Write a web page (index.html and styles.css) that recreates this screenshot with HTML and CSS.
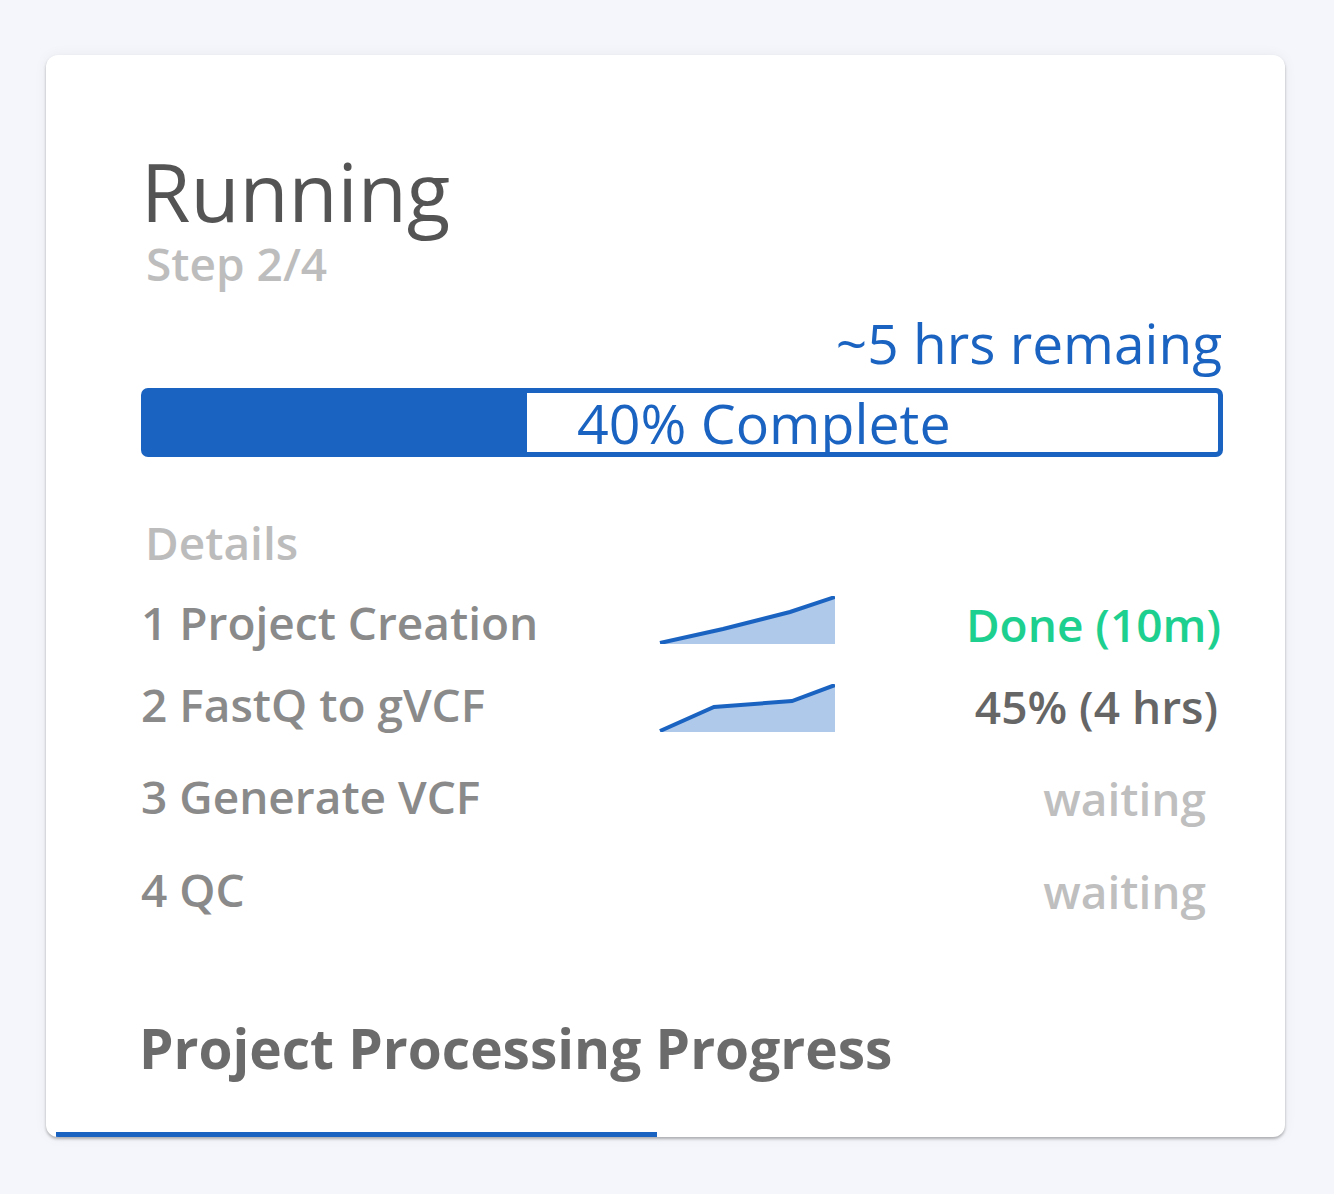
FILE: index.html
```html
<!DOCTYPE html>
<html lang="en">
<head>
<meta charset="utf-8">
<title>Project Processing Progress</title>
<link rel="stylesheet" href="styles.css">
</head>
<body>
<div class="card">
  <div class="content">
    <h1 class="title">Running</h1>
    <div class="step">Step 2/4</div>
    <div class="remaining">~5 hrs remaing</div>
    <div class="bar">
      <div class="bar-fill" style="width: 35.5%"></div>
      <span class="bar-label">40% Complete</span>
    </div>
    <div class="details-head">Details</div>
    <div class="row row-1">
      <span class="label">1 Project Creation</span>
      <svg class="spark spark-1" width="176" height="48" viewBox="0 0 176 48">
        <polygon points="1,48 64,34 131,17 176,2 176,48" fill="#afc9eb"/>
        <polyline points="1,47 64,33 131,16 176,1" fill="none" stroke="#1b63c1" stroke-width="4"/>
      </svg>
      <span class="status status-done">Done (10m)</span>
    </div>
    <div class="row row-2">
      <span class="label">2 FastQ to gVCF</span>
      <svg class="spark spark-2" width="176" height="48" viewBox="0 0 176 48">
        <polygon points="1,48 55,24 133,18 176,2 176,48" fill="#afc9eb"/>
        <polyline points="1,47 55,23 133,17 176,1" fill="none" stroke="#1b63c1" stroke-width="4"/>
      </svg>
      <span class="status status-run">45% (4 hrs)</span>
    </div>
    <div class="row row-3">
      <span class="label">3 Generate VCF</span>
      <span class="spark-empty"></span>
      <span class="status status-wait">waiting</span>
    </div>
    <div class="row row-4">
      <span class="label">4 QC</span>
      <span class="spark-empty"></span>
      <span class="status status-wait">waiting</span>
    </div>
    <h2 class="footer-title">Project Processing Progress</h2>
  </div>
  <div class="tab-line"></div>
</div>
</body>
</html>
```

FILE: styles.css
```css
html, body {
  margin: 0;
  padding: 0;
}
body {
  background: #f4f6fb;
  font-family: "Open Sans", "Noto Sans", sans-serif;
  width: 1334px;
  height: 1194px;
  overflow: hidden;
}
.card {
  margin: 55px 0 0 46px;
  width: 1239px;
  height: 1082px;
  background: #fff;
  border-radius: 12px;
  box-shadow: 0 2px 3px rgba(0, 0, 0, 0.28), 0 0 14px rgba(0, 0, 0, 0.05);
  display: flex;
  flex-direction: column;
  overflow: hidden;
}
.content {
  padding: 96px 62px 0 95px;
  display: flex;
  flex-direction: column;
}
.title {
  margin: 0;
  font-size: 80px;
  line-height: 80px;
  font-weight: 400;
  color: #545454;
}
.step {
  margin-top: 9px;
  font-size: 46px;
  line-height: 46px;
  font-weight: 600;
  color: #bdbdbd;
  padding-left: 5px;
}
.remaining {
  margin-top: 31px;
  align-self: flex-end;
  font-size: 55px;
  line-height: 52px;
  color: #1b63c1;
  margin-right: 1px;
}
.bar {
  margin-top: 19px;
  position: relative;
  height: 69px;
  box-sizing: border-box;
  border: 5px solid #1b63c1;
  border-radius: 7px;
  display: flex;
}
.bar-fill {
  background: #1b63c1;
  height: 100%;
}
.bar-label {
  position: absolute;
  left: 431px;
  top: 0;
  font-size: 55.5px;
  line-height: 59px;
  color: #1b63c1;
}
.details-head {
  margin-top: 62px;
  font-size: 46px;
  line-height: 46px;
  font-weight: 600;
  color: #bcbcbc;
  padding-left: 4px;
}
.row {
  display: flex;
  align-items: flex-start;
}
.row-1 { margin-top: 33px; height: 82px; }
.row-2 { height: 92px; }
.row-3 { height: 93px; }
.row-4 { height: 48px; }
.label {
  width: 518px;
  font-size: 46px;
  line-height: 48px;
  font-weight: 600;
  color: #8a8a8a;
}
.spark {
  display: block;
  flex: none;
}
.spark-1 { margin-top: -2px; }
.spark-2 { margin-top: 4px; }
.spark-empty {
  width: 176px;
  flex: none;
}
.status {
  flex: 1;
  text-align: right;
  font-size: 46px;
  line-height: 48px;
  font-weight: 600;
  padding-top: 2px;
}
.status-done { color: #1dd08f; padding-right: 2px; }
.status-run { color: #666666; padding-right: 5px; }
.status-wait { color: #bfbfbf; padding-right: 17px; }
.footer-title {
  margin: 108px 0 0 -2px;
  font-size: 55px;
  line-height: 53px;
  font-weight: 700;
  color: #6b6b6b;
}
.tab-line {
  margin-top: auto;
  margin-left: 10px;
  width: 601px;
  height: 5px;
  background: #1b63c1;
}
```
